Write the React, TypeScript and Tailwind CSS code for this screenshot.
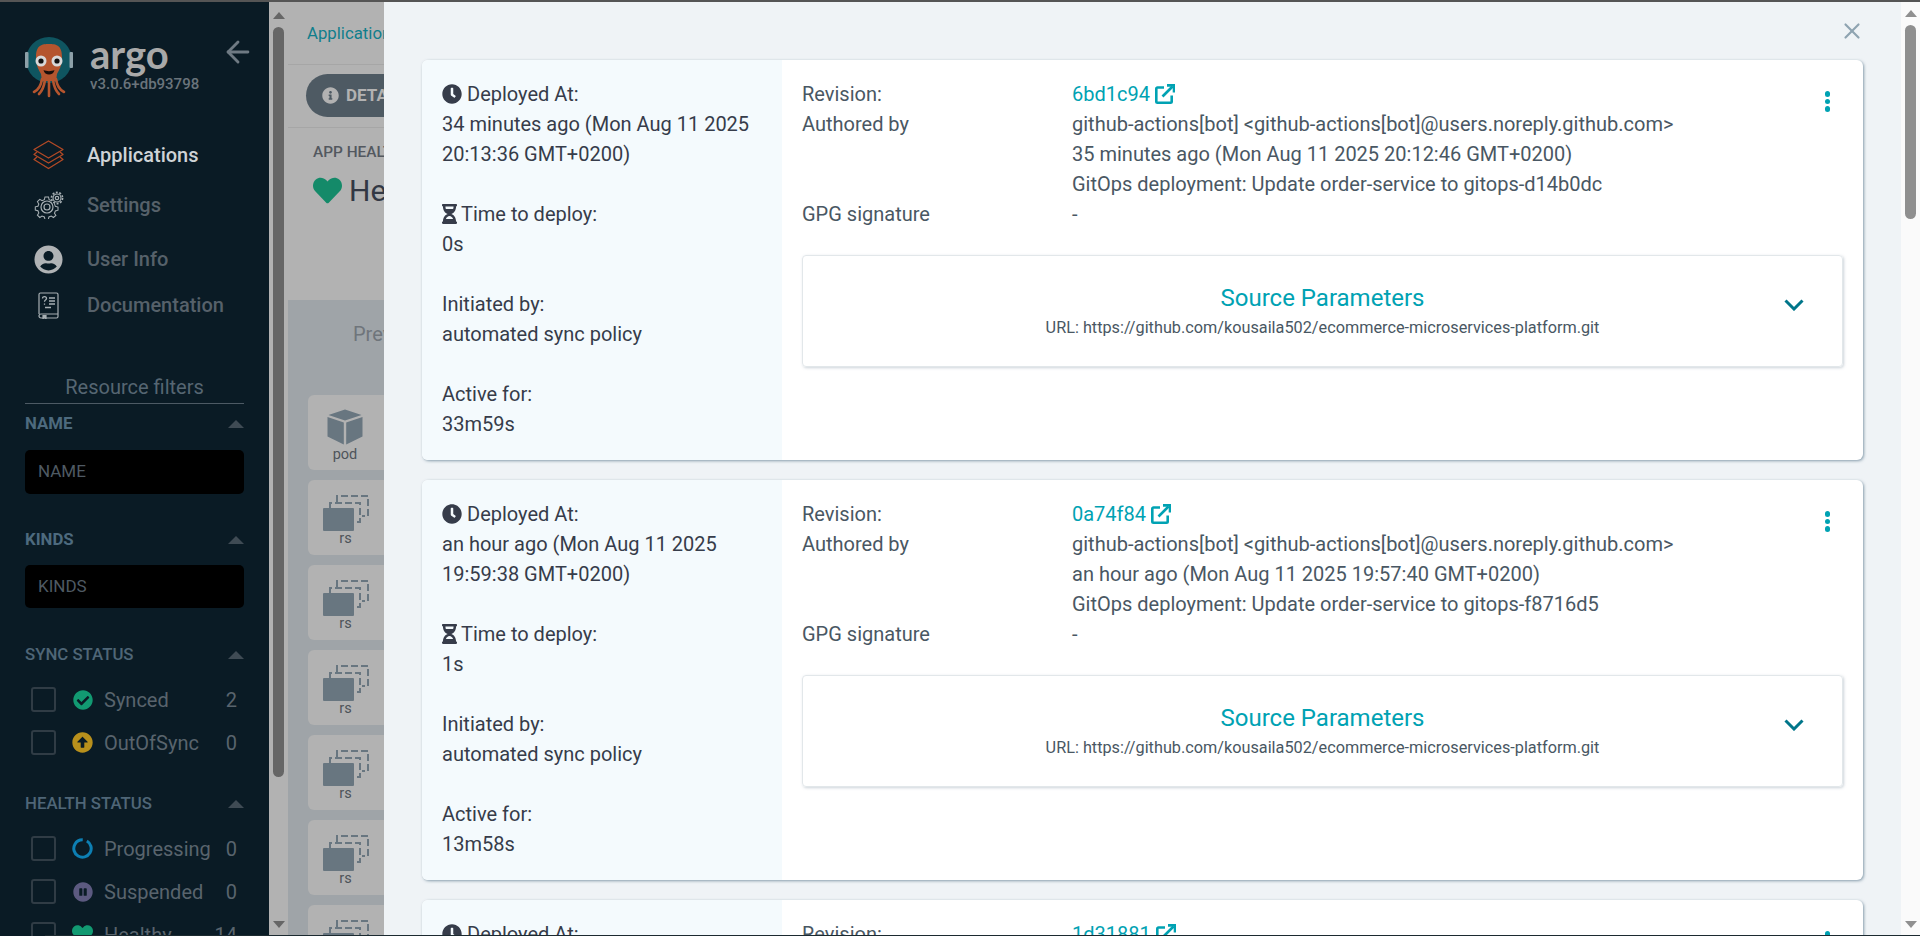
import React from "react";
import { FaClock, FaHourglassHalf, FaHeart, FaInfoCircle, FaCheckCircle, FaArrowAltCircleUp, FaPauseCircle, FaUserCircle } from "react-icons/fa";
import { ArrowLeft, X } from "lucide-react";

const font = { fontFamily: "Roboto, 'Liberation Sans', sans-serif" };

function Logo() {
  return (
    <svg width="50" height="64" viewBox="0 0 50 64" className="shrink-0">
      <circle cx="24" cy="25" r="23" fill="#0f5560" />
      <rect x="0" y="17" width="3.500" height="16" rx="1" fill="#8da0a8" />
      <rect x="44.500" y="17" width="3.500" height="16" rx="1" fill="#8da0a8" />
      <path d="M11 22c0-12 6-13 13-13s13 1 13 13c0 9-3 13-5 17l-1 7h-14l-1-7c-2-4-5-8-5-17z" fill="#b5552e" />
      <path d="M17 44c-1 7-4 11-8 13M20 45c-1 7-3 11-6 14M24 45v16M28 45c1 7 3 11 6 14M31 44c1 7 4 11 8 13" stroke="#b5552e" strokeWidth="2.600" fill="none" strokeLinecap="round" />
      <circle cx="16" cy="26" r="5.500" fill="#d8d8d8" />
      <circle cx="32" cy="26" r="5.500" fill="#d8d8d8" />
      <circle cx="16" cy="26" r="2.600" fill="#111" />
      <circle cx="32" cy="26" r="2.600" fill="#111" />
      <path d="M18.500 35c3 1.500 8 1.500 11 0c-1 6-10 6-11 0z" fill="#1a0f0c" />
    </svg>
  );
}

function LayersIcon() {
  return (
    <svg width="31" height="30" viewBox="0 0 31 30" fill="none" stroke="#b34a26" strokeWidth="1.300" strokeLinejoin="round">
      <path d="M15.500 1L30 9.500L15.500 18L1 9.500z" />
      <path d="M4 12L1 14.500L15.500 23L30 14.500L27 12" />
      <path d="M4 17L1 19.500L15.500 28.500L30 19.500L27 17" />
    </svg>
  );
}

function GearsIcon() {
  return (
    <svg width="30" height="28" viewBox="0 0 30 28" fill="none" stroke="#a8b0b4" strokeWidth="1.200">
      <circle cx="13" cy="16" r="3" />
      <path d="M11 5h4l.7 3 2.600 1.200 2.600-1.500 2.600 2.800-1.600 2.500.9 2.600 3 .8v3.600l-3 .8-1 2.600 1.600 2.500-2.800 2.400-2.500-1.600-2.600 1-.7 2.800h-3.800l-.7-2.800-2.700-1-2.500 1.600-2.700-2.600 1.600-2.500-1-2.600-3-.7v-3.700l3-.7 1-2.600-1.600-2.600 2.700-2.600 2.600 1.500 2.600-1.200z" transform="translate(1.300 1.600) scale(.88)" />
      <circle cx="13" cy="16" r="6" />
      <circle cx="23" cy="7" r="6.500" fill="#0a1b25" stroke="none" />
      <circle cx="23" cy="7" r="1.700" />
      <circle cx="23" cy="7" r="4" />
      <circle cx="23" cy="7" r="5.600" strokeDasharray="2 1.500" strokeWidth="1.600" />
    </svg>
  );
}

function BookIcon() {
  return (
    <svg width="21" height="27" viewBox="0 0 21 27" fill="none" stroke="#a8b0b4" strokeWidth="1.200">
      <path d="M1 22V2.500C1 1.500 1.500 1 2.500 1h16c1 0 1.500.5 1.500 1.500v22c0 1-.5 1.500-1.500 1.500H3c-1.200 0-2-1-2-2s.8-2 2-2h17" />
      <path d="M5 23v3.500l1.500-1 1.500 1V23" fill="#a8b0b4" />
      <path d="M11 6h6M11 9h6M11 12h6M7 15.500h6" strokeWidth="1.400" />
      <path d="M4.500 6.500c0-2.500 4-2.500 4 0c0 1.600-2 1.600-2 3.200M6.500 11.500v1.200" strokeWidth="1.300" />
    </svg>
  );
}

function RsIcon() {
  return (
    <svg width="46" height="36" viewBox="0 0 46 36" className="shrink-0">
      <g fill="none" stroke="#687680" strokeWidth="2" strokeDasharray="7 3">
        <path d="M14 7V1H45V21H39" />
        <path d="M7 13V8H37V27H31" />
      </g>
      <rect x="0" y="13" width="31" height="23" rx="1" fill="#687680" />
    </svg>
  );
}

function CubeIcon() {
  return (
    <svg width="36" height="36" viewBox="0 0 36 36" fill="#687680" className="shrink-0">
      <path d="M18 0.500L34.500 6L18 11.500L1.500 6z" />
      <path d="M0.500 8L16.800 13.500V35.500L0.500 27.500z" />
      <path d="M35.500 8L19.200 13.500V35.500L35.500 27.500z" />
    </svg>
  );
}

function ExternalIcon() {
  return (
    <svg width="20" height="20" viewBox="0 0 20 20" fill="none" stroke="#00a2b3" strokeWidth="2.600" className="shrink-0">
      <path d="M9 3.500H2.500C1.700 3.500 1.300 3.900 1.300 4.700V17.500c0 .8.400 1.200 1.200 1.200h13c.8 0 1.200-.4 1.200-1.200v-6" />
      <path d="M7.500 12.500L17.500 2.500" />
      <path d="M12 1.400h7v7" strokeLinejoin="miter" />
    </svg>
  );
}

function Triangle() {
  return <div className="w-0 h-0 border-l-[8px] border-r-[8px] border-b-[8px] border-l-transparent border-r-transparent border-b-[#3f4b54]" />;
}

function FilterHeader({ label, bold, mt }: { label: string; bold?: boolean; mt: string }) {
  return (
    <div className={`flex items-center justify-between h-5 ${mt}`}>
      <span className={`text-[16.800px] ${bold ? "font-bold text-[#4d6a7e]" : "font-medium text-[#4f6677]"}`}>{label}</span>
      <Triangle />
    </div>
  );
}

function FilterRow({ icon, label, count }: { icon: React.ReactNode; label: string; count: string }) {
  return (
    <div className="flex items-center h-[25px] pl-[6px] pr-[7px] mb-[18px] text-[#59646d] text-[20px]">
      <div className="w-[25px] h-[25px] border-2 border-[#303c45] rounded-[3px] shrink-0" />
      <div className="w-[21px] h-[21px] ml-[16px] flex items-center justify-center shrink-0">{icon}</div>
      <span className="ml-[11px] flex-1 whitespace-nowrap">{label}</span>
      <span>{count}</span>
    </div>
  );
}

function Sidebar() {
  return (
    <div className="w-[269px] shrink-0 h-full bg-[#0a1b25] overflow-hidden">
      <div className="flex pl-[25px] pt-[33px] h-[118px]">
        <Logo />
        <div className="ml-[15px] flex flex-col w-[110px]">
          <div className="text-[40px] leading-[38px] font-bold text-[#a9a9a9]" style={{ fontFamily: "Lato, sans-serif" }}>argo</div>
          <div className="text-[15px] leading-4 mt-[3px] font-medium text-[#6a747b] whitespace-nowrap">v3.0.6+db93798</div>
        </div>
        <ArrowLeft className="ml-[21px] mt-0" size={34} color="#6f7a83" strokeWidth={2} />
      </div>
      <div className="pl-[33px] text-[20px]">
        <div className="flex items-center h-[30px] mt-[20px]">
          <div className="w-[31px] flex justify-center"><LayersIcon /></div>
          <span className="ml-[23px] font-medium text-[#cfd3d6]">Applications</span>
        </div>
        <div className="flex items-center h-[30px] mt-[20px]">
          <div className="w-[31px] flex justify-center"><GearsIcon /></div>
          <span className="ml-[23px] font-medium text-[#56616a]">Settings</span>
        </div>
        <div className="flex items-center h-[30px] mt-[24px]">
          <div className="w-[31px] flex justify-center"><FaUserCircle size={29} color="#b0b3b5" /></div>
          <span className="ml-[23px] font-medium text-[#56616a]">User Info</span>
        </div>
        <div className="flex items-center h-[30px] mt-[16px]">
          <div className="w-[31px] flex justify-center"><BookIcon /></div>
          <span className="ml-[23px] font-medium text-[#56616a]">Documentation</span>
        </div>
      </div>
      <div className="mx-[25px] mt-[56px]">
        <div className="text-[20px] leading-[22px] pb-[5px] text-center text-[#566672] border-b border-[#4d5a64]">Resource filters</div>
        <FilterHeader label="NAME" bold mt="mt-[10px]" />
        <div className="mt-[16px] h-[44px] rounded-[5px] bg-black flex items-center pl-[13px] text-[17px] text-[#4f5a63]">NAME</div>
        <FilterHeader label="KINDS" bold mt="mt-[36px]" />
        <div className="mt-[15px] h-[43px] rounded-[5px] bg-black flex items-center pl-[13px] text-[17px] text-[#4f5a63]">KINDS</div>
        <FilterHeader label="SYNC STATUS" mt="mt-[37px]" />
        <div className="mt-[22px]">
          <FilterRow icon={<FaCheckCircle size={20} color="#129a72" />} label="Synced" count="2" />
          <FilterRow icon={<FaArrowAltCircleUp size={21} color="#b8901c" />} label="OutOfSync" count="0" />
        </div>
        <FilterHeader label="HEALTH STATUS" mt="mt-[39px]" />
        <div className="mt-[22px]">
          <FilterRow
            icon={
              <svg width="21" height="21" viewBox="0 0 21 21" fill="none" stroke="#0d7fb3" strokeWidth="3">
                <circle cx="10.500" cy="10.500" r="8.700" strokeDasharray="50 5" transform="rotate(-60 10.500 10.500)" />
              </svg>
            }
            label="Progressing"
            count="0"
          />
          <FilterRow icon={<FaPauseCircle size={20} color="#5c5a80" />} label="Suspended" count="0" />
          <FilterRow icon={<FaHeart size={21} color="#129a72" />} label="Healthy" count="14" />
        </div>
      </div>
    </div>
  );
}

function PageBehind() {
  const tiles = Array.from({ length: 7 });
  return (
    <div className="flex-1 min-w-0 h-full flex overflow-hidden bg-[#b2b2b2]">
      <div className="w-[19px] shrink-0 h-full flex flex-col items-center pt-[10px] pb-[8px]">
        <div className="w-0 h-0 border-l-[6px] border-r-[6px] border-b-[7px] border-l-transparent border-r-transparent border-b-[#666]" />
        <div className="w-[11px] mt-[8px] h-[750px] rounded-[6px] bg-[#666]" />
        <div className="mt-auto w-0 h-0 border-l-[6px] border-r-[6px] border-t-[7px] border-l-transparent border-r-transparent border-t-[#666]" />
      </div>
      <div className="flex-1 min-w-0 overflow-hidden">
        <div className="h-[63px] pl-[19px] pt-[19px] border-b border-[#a6a6a6] text-[16.800px] text-[#0f7e8c] whitespace-nowrap">Applications</div>
        <div className="h-[63px] border-b border-[#a6a6a6] pt-[9px] pl-[18px]">
          <div className="inline-flex items-center h-[43px] w-[200px] rounded-[22px] bg-[#4e5a63] pl-[16px] text-[#b2b2b2] font-bold text-[17px]">
            <FaInfoCircle size={17} color="#b2b2b2" />
            <span className="ml-[7px]">DETAILS</span>
          </div>
        </div>
        <div className="h-[172px] pl-[25px] pt-[14px]">
          <div className="text-[15.400px] leading-5 font-medium text-[#53585f] whitespace-nowrap">APP HEALTH</div>
          <div className="flex items-center h-[30px] mt-[13px] text-[30px] text-[#323844] whitespace-nowrap">
            <FaHeart size={29} color="#148a69" />
            <span className="ml-[7px]">Healthy</span>
          </div>
        </div>
        <div className="h-full bg-[#9fa4a8] pl-[20px] pt-[22px]">
          <div className="pl-[45px] text-[20px] leading-6 text-[#6f757b] whitespace-nowrap">Preview</div>
          <div className="mt-[49px] flex flex-col gap-[10px]">
            <div className="w-[90px] h-[75px] rounded-l-[6px] bg-[#b2b2b2] shrink-0">
              <div className="w-[74px] flex flex-col items-center">
                <div className="mt-[14px]"><CubeIcon /></div>
                <span className="text-[14.500px] leading-4 mt-[2px] text-[#4e545a]">pod</span>
              </div>
            </div>
            {tiles.map((_, i) => (
              <div key={i} className="w-[90px] h-[75px] rounded-l-[6px] bg-[#b2b2b2] shrink-0">
                <div className="w-[75px] flex flex-col items-center">
                  <div className="mt-[15px]"><RsIcon /></div>
                  <span className="text-[14.500px] leading-4 text-[#4e545a]">rs</span>
                </div>
              </div>
            ))}
          </div>
        </div>
      </div>
    </div>
  );
}

type Dep = {
  deployed: string[]; time: string; active: string; rev: string; ago: string; msg: string;
};

function Row({ label, children }: { label: string; children: React.ReactNode }) {
  return (
    <div className="flex">
      <div className="w-[270px] shrink-0">{label}</div>
      <div className="min-w-0">{children}</div>
    </div>
  );
}

function Kebab() {
  return (
    <div className="absolute right-[33px] top-[31px] flex flex-col gap-[2px]">
      <div className="w-[5.500px] h-[5.500px] rounded-full bg-[#00a2b3]" />
      <div className="w-[5.500px] h-[5.500px] rounded-full bg-[#00a2b3]" />
      <div className="w-[5.500px] h-[5.500px] rounded-full bg-[#00a2b3]" />
    </div>
  );
}

function Card({ d }: { d: Dep }) {
  return (
    <div className="relative flex h-[400px] shrink-0 rounded-[6px] bg-white shadow-[1px_1px_3px_rgba(90,120,140,0.7)] overflow-hidden text-[20px] leading-[30px]">
      <div className="w-[360px] shrink-0 bg-[#f4fafd] px-[20px] pt-[19px] pr-[10px] text-[#363c4a]">
        <div className="flex items-center gap-[5px]"><FaClock size={20} color="#363c4a" /><span>Deployed At:</span></div>
        <div>{d.deployed[0]}</div>
        <div>{d.deployed[1]}</div>
        <div className="flex items-center gap-[4px] mt-[30px]"><FaHourglassHalf className="w-[15px] h-[20px]" color="#363c4a" /><span>Time to deploy:</span></div>
        <div>{d.time}</div>
        <div className="mt-[30px]">Initiated by:</div>
        <div>automated sync policy</div>
        <div className="mt-[30px]">Active for:</div>
        <div>{d.active}</div>
      </div>
      <div className="flex-1 min-w-0 px-[20px] pt-[19px] text-[#495763]">
        <Row label="Revision:">
          <span className="inline-flex items-center gap-[5px] text-[#00a2b3]">{d.rev}<ExternalIcon /></span>
        </Row>
        <Row label="Authored by">
          <div>github-actions[bot] &lt;github-actions[bot]@users.noreply.github.com&gt;</div>
          <div>{d.ago}</div>
          <div>{d.msg}</div>
        </Row>
        <Row label="GPG signature">-</Row>
        <div className="relative mt-[26px] h-[112px] rounded-[4px] border border-[#e2e7ea] shadow-[1px_1px_3px_rgba(110,130,150,0.35)] flex flex-col items-center">
          <div className="mt-[27px] text-[24px] leading-[30px] text-[#00a2b3]">Source Parameters</div>
          <div className="mt-[3px] text-[16.250px] leading-[24px]">URL: https://github.com/kousaila502/ecommerce-microservices-platform.git</div>
          <svg width="20" height="12" viewBox="0 0 20 12" fill="none" stroke="#00768a" strokeWidth="3" className="absolute right-[38px] top-[43px]">
            <path d="M1.500 1.500L10 10L18.500 1.500" />
          </svg>
        </div>
        <Kebab />
      </div>
    </div>
  );
}

const deps: Dep[] = [
  { deployed: ["34 minutes ago (Mon Aug 11 2025", "20:13:36 GMT+0200)"], time: "0s", active: "33m59s", rev: "6bd1c94", ago: "35 minutes ago (Mon Aug 11 2025 20:12:46 GMT+0200)", msg: "GitOps deployment: Update order-service to gitops-d14b0dc" },
  { deployed: ["an hour ago (Mon Aug 11 2025", "19:59:38 GMT+0200)"], time: "1s", active: "13m58s", rev: "0a74f84", ago: "an hour ago (Mon Aug 11 2025 19:57:40 GMT+0200)", msg: "GitOps deployment: Update order-service to gitops-f8716d5" },
];

function Modal() {
  return (
    <div className="absolute left-[384px] right-0 top-[2px] bottom-0 flex bg-[#eff3f6] overflow-hidden">
      <div className="flex-1 min-w-0 relative px-[38px] pt-[58px] flex flex-col gap-[20px]">
        <X className="absolute right-[36px] top-[16px]" size={26} color="#8fa4b1" strokeWidth={2} />
        <Card d={deps[0]} />
        <Card d={deps[1]} />
        <div className="relative flex h-[400px] shrink-0 rounded-[6px] bg-white shadow-[1px_1px_3px_rgba(90,120,140,0.7)] overflow-hidden text-[20px] leading-[30px]">
          <div className="w-[360px] shrink-0 bg-[#f4fafd] px-[20px] pt-[19px] pr-[10px] text-[#363c4a]">
            <div className="flex items-center gap-[5px]"><FaClock size={20} color="#363c4a" /><span>Deployed At:</span></div>
          </div>
          <div className="flex-1 min-w-0 px-[20px] pt-[19px] text-[#495763]">
            <Row label="Revision:">
              <span className="inline-flex items-center gap-[5px] text-[#00a2b3]">1d31881<ExternalIcon /></span>
            </Row>
            <Kebab />
          </div>
        </div>
      </div>
      <div className="w-[19px] shrink-0 h-full bg-[#fafafa] flex flex-col items-center pt-[8px] pb-[8px]">
        <div className="w-0 h-0 border-l-[6px] border-r-[6px] border-b-[7px] border-l-transparent border-r-transparent border-b-[#8f8f8f]" />
        <div className="w-[11px] mt-[8px] h-[194px] rounded-[6px] bg-[#8f8f8f]" />
        <div className="mt-auto w-0 h-0 border-l-[6px] border-r-[6px] border-t-[7px] border-l-transparent border-r-transparent border-t-[#8f8f8f]" />
      </div>
    </div>
  );
}

export default function App() {
  return (
    <div className="relative w-full h-[936px] overflow-hidden" style={font}>
      <div className="h-[2px] bg-[#555] absolute inset-x-0 top-0 z-10" />
      <div className="absolute left-[45px] right-0 bottom-0 h-px bg-[#1c2a30] z-10" />
      <div className="flex h-full pt-[2px]">
        <Sidebar />
        <PageBehind />
      </div>
      <Modal />
    </div>
  );
}
